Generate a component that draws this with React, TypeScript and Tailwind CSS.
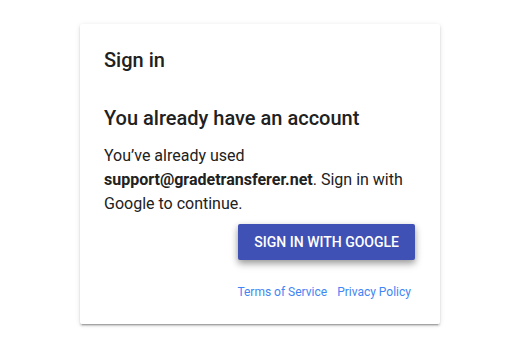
export default function App() {
  return (
    <div
      className="flex min-h-[344px] w-full justify-center bg-white pr-[2px] pt-6"
      style={{ fontFamily: 'Roboto, "Liberation Sans", sans-serif' }}
    >
      <div className="flex h-[300px] w-[360px] flex-col rounded-[2px] bg-white px-6 shadow-[0_2px_2px_0_rgba(0,0,0,0.14),0_3px_1px_-2px_rgba(0,0,0,0.2),0_1px_5px_0_rgba(0,0,0,0.12)]">
        <h1 className="mt-[22px] text-[20px] font-medium leading-[28px] text-[#212121]">Sign in</h1>
        <h2 className="mt-[30px] text-[20px] font-medium leading-[28px] text-[#212121]">
          You already have an account
        </h2>
        <p className="mt-[12px] text-[16px] leading-[24px] text-[#212121]">
          You’ve already used <b className="font-bold">support@gradetransferer.net</b>. Sign in with
          Google to continue.
        </p>
        <div className="mt-[8px] flex justify-end pr-[1px]">
          <button className="h-[36px] rounded-[2px] bg-[#3f51b5] px-4 text-[14px] font-medium uppercase text-white shadow-[0_3px_6px_0_rgba(0,0,0,0.3),0_4px_10px_rgba(0,0,0,0.15)]">
            Sign in with Google
          </button>
        </div>
        <div className="mt-[24px] flex justify-end gap-[10px] pr-[5px] text-[12px] leading-[16px] text-[#4285f4]">
          <a>Terms of Service</a>
          <a>Privacy Policy</a>
        </div>
      </div>
    </div>
  );
}
